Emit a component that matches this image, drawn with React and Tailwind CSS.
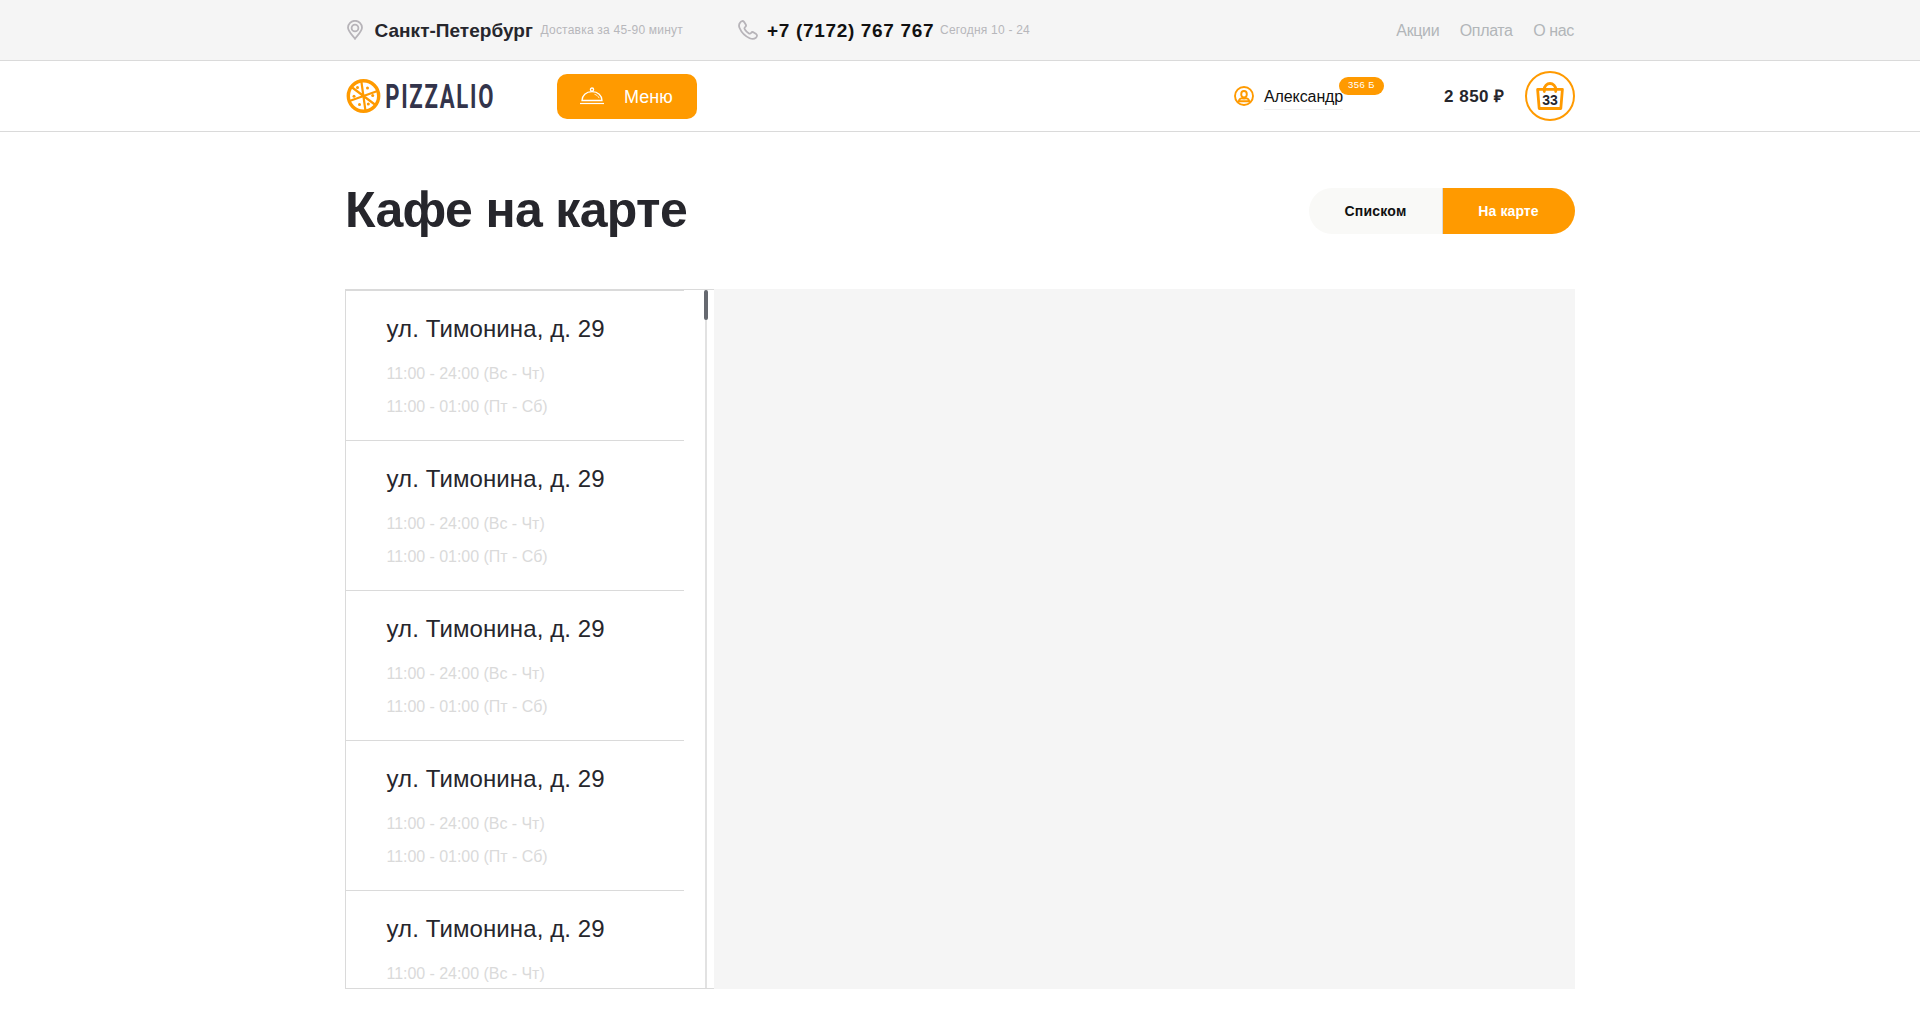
const cafes = [1, 2, 3, 4, 5];

function Pin() {
  return (
    <svg width="16" height="20" viewBox="0 0 16 20" fill="none" stroke="#b7b4b9" strokeWidth="1.8">
      <path d="M8 18.7C6.5 16.3 1 11.8 1 7.6a7 6.8 0 0 1 14 0c0 4.200-5.500 8.700-7 11.100z" />
      <circle cx="8" cy="8" r="3.400" />
    </svg>
  );
}

function Phone() {
  return (
    <svg width="20" height="20" viewBox="0 0 20 20" fill="none" stroke="#b7b4b9" strokeWidth="1.800" strokeLinejoin="round">
      <path d="M2.300 2.300C3.500.8 5 .6 6 1.800l1.700 2.600c.7 1.100.3 2-.6 2.700-1 .8-.9 1.400-.2 2.500 1 1.500 2.200 2.700 3.700 3.600 1 .7 1.700.7 2.400-.2.800-1 1.700-1.300 2.700-.6l2.500 1.700c1.200.9 1.100 2.400-.3 3.600-1.600 1.400-3.700 1.600-6.200.5C6.800 16 3.500 12.600 1.600 8 .6 5.600.9 3.800 2.300 2.300z" />
    </svg>
  );
}

function PizzaLogo() {
  return (
    <svg className="overflow-visible" width="160" height="44" viewBox="0 0 160 44" role="img">
      <circle cx="16.500" cy="22" r="15.200" fill="none" stroke="#ff9a00" strokeWidth="3.400" />
      <path d="M14.300 7L18.500 37M30.500 17L2.500 27M4.500 13L28.500 31" stroke="#ff9a00" strokeWidth="2.200" />
      <g fill="#ff9a00">
        <circle cx="10.500" cy="13.500" r="1.500" />
        <circle cx="20.500" cy="14" r="1.500" />
        <circle cx="25.700" cy="21.500" r="1.500" />
        <circle cx="21.300" cy="30" r="1.500" />
        <circle cx="12.500" cy="30.500" r="1.500" />
        <circle cx="7" cy="22.300" r="1.500" />
      </g>
      <text x="38.200" y="33.800" fontFamily="Roboto, sans-serif" fontWeight="700" fontSize="33.500" letterSpacing="2.600" fill="#33344b" textLength="110" lengthAdjust="spacingAndGlyphs">PIZZALIO</text>
    </svg>
  );
}

function Cloche() {
  return (
    <svg width="24" height="18" viewBox="0 0 24 18" fill="none" stroke="#fff" strokeWidth="1.300">
      <path d="M2 13.500C2 8.500 6 4.600 12 4.600s10 3.900 10 8.900z" />
      <circle cx="12" cy="2.600" r="1.600" />
      <path d="M0 16.500h24" strokeWidth="1.200" />
      <path d="M14.500 7.300c2.200.6 3.800 1.900 4.600 3.800" strokeWidth=".8" />
    </svg>
  );
}

function User() {
  return (
    <svg width="20" height="20" viewBox="0 0 20 20" fill="none" stroke="#ff9a00" strokeWidth="1.900">
      <circle cx="10" cy="10" r="9" />
      <ellipse cx="10" cy="8.200" rx="2.800" ry="3.200" />
      <path d="M4.800 15.300c.2-2 1.300-2.900 3.300-3.200 1.400.7 2.400.7 3.800 0 2 .3 3.100 1.200 3.300 3.200z" strokeLinejoin="round" />
    </svg>
  );
}

function Bag() {
  return (
    <svg width="28" height="28" viewBox="0 0 28 28" fill="none" stroke="#ff9a00" strokeWidth="2.800" strokeLinejoin="round" strokeLinecap="round">
      <path d="M1.600 7.300h24.800L24.800 26.500H3.200z" />
      <path d="M8.300 9.500V7.200a5.700 5.700 0 0 1 11.400 0v2.300" />
    </svg>
  );
}

export default function App() {
  return (
    <div className="min-h-[1024px] bg-white font-['Liberation_Sans',sans-serif] text-[#26262c]">
      <div className="h-[61px] border-b border-[#dadada] bg-[#f5f5f5]">
        <div className="mx-auto flex h-[60px] w-[1230px] items-center">
          <div className="ml-[2px] w-[27.500px]"><Pin /></div>
          <div className="w-[166px] pt-[2px] text-[19px] font-bold tracking-[0.03px] whitespace-nowrap">Санкт-Петербург</div>
          <div className="w-[197px] text-[12px] tracking-[0.22px] whitespace-nowrap text-[#b7b7bb]">Доставка за 45-90 минут</div>
          <div className="w-[29.500px]"><Phone /></div>
          <div className="w-[173px] pt-[2px] text-[19px] font-bold tracking-[0.67px] whitespace-nowrap text-[#111]">+7 (7172) 767 767</div>
          <div className="text-[12px] tracking-[0.22px] whitespace-nowrap text-[#b7b7bb]">Сегодня 10 - 24</div>
          <nav className="mr-px ml-auto flex gap-[20.500px] pt-px text-[16px] tracking-[-0.36px] text-[#b2b6b9]">
            <a>Акции</a>
            <a>Оплата</a>
            <a>О нас</a>
          </nav>
        </div>
      </div>

      <header className="h-[71px] border-b border-[#dadada]">
        <div className="mx-auto flex h-[70px] w-[1230px] items-center">
          <div className="ml-[2px] w-[210px]"><PizzaLogo /></div>
          <button className="flex h-[45px] w-[140px] items-center rounded-[10px] bg-[#ff9a00] pl-[23px] text-[18px] text-white">
            <Cloche />
            <span className="ml-5 pt-[2px]">Меню</span>
          </button>
          <div className="ml-[537px] w-[30px]"><User /></div>
          <div className="relative w-[180px]">
            <span className="inline-block h-[27px] border-b border-[#f2f2f2] pt-[2px] text-[16px] leading-[24px] tracking-[-0.1px] text-[#111]">Александр</span>
            <span className="absolute -top-[6px] left-[75px] flex h-[18px] w-[45px] items-center justify-center rounded-full bg-[#ff9a00] text-[9.500px] tracking-[0.5px] text-white">356 Б</span>
          </div>
          <div className="pt-px text-[17px] font-bold tracking-[0.5px] whitespace-nowrap">2 850 ₽</div>
          <div className="relative ml-auto flex h-[50px] w-[50px] items-center justify-center rounded-full border-2 border-[#ff9a00]">
            <Bag />
            <span className="absolute top-[18px] text-[14px] leading-[18px] font-bold">33</span>
          </div>
        </div>
      </header>

      <main className="mx-auto w-[1230px]">
        <div className="flex h-[157px] items-center justify-between">
          <h1 className="pb-[2px] text-[50px] leading-[60px] font-bold tracking-[-0.66px]">Кафе на карте</h1>
          <div className="flex h-[46px] w-[266px] overflow-hidden rounded-full text-[14px] font-bold">
            <div className="flex w-[134px] items-center justify-center border-r border-[#d9d9d9] bg-[#f9f9f7] pt-px tracking-[0.2px] text-[#111]">Списком</div>
            <div className="flex flex-1 items-center justify-center bg-[#ff9a00] pt-px pr-px tracking-[0.1px] text-white">На карте</div>
          </div>
        </div>

        <div className="flex h-[700px]">
          <div className="flex w-[369px] overflow-hidden border-y border-l border-[#dadada]">
            <div className="w-[338px] border-t border-[#dadada]">
              {cafes.map((id) => (
                <div key={id} className="h-[150px] border-b border-[#dadada] pt-[23px] pl-[40.500px]">
                  <div className="text-[24px] leading-[30px] tracking-[0.1px]">ул. Тимонина, д. 29</div>
                  <div className="mt-[13px] text-[16px] leading-[33px] tracking-[-0.04px] text-[#dadada]">
                    <div>11:00 - 24:00 (Вс - Чт)</div>
                    <div>11:00 - 01:00 (Пт - Сб)</div>
                  </div>
                </div>
              ))}
            </div>
            <div className="ml-5 flex w-1 justify-center">
              <div className="h-[698px] w-[2px] bg-[#e2e2e2]">
                <div className="-ml-px h-[30px] w-1 rounded-full bg-[#666970]" />
              </div>
            </div>
          </div>
          <div className="flex-1 bg-[#f5f5f5]" />
        </div>
      </main>
    </div>
  );
}
